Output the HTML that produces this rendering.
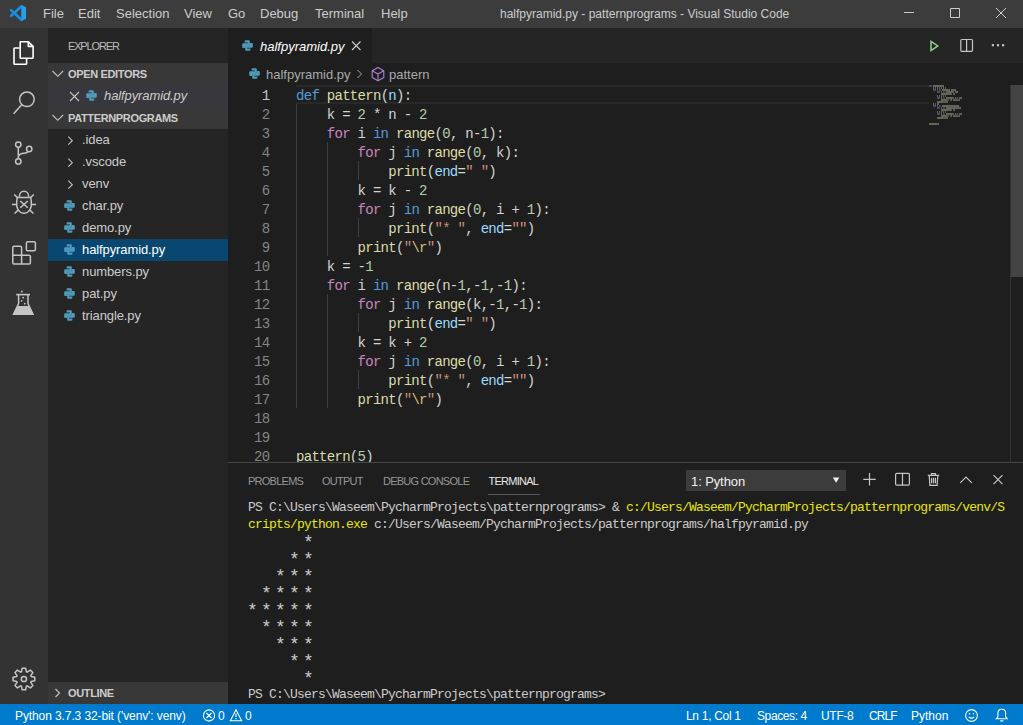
<!DOCTYPE html>
<html><head><meta charset="utf-8">
<style>
*{margin:0;padding:0;box-sizing:border-box}
html,body{width:1023px;height:725px;overflow:hidden;background:#1e1e1e;font-family:"Liberation Sans",sans-serif;position:relative}
.a{position:absolute;white-space:pre}
.r{position:absolute}
#title{left:0;top:0;width:1023px;height:28px;background:#3c3c3c}
.menu{font-size:13px;color:#cccccc;top:0;line-height:28px}
#act{left:0;top:28px;width:48px;height:676px;background:#333333}
#side{left:48px;top:28px;width:180px;height:676px;background:#252526}
#status{left:0;top:704px;width:1023px;height:21px;background:#007acc}
.st{font-size:12px;color:#ffffff;top:705px;line-height:22px}
.sec{position:absolute;left:48px;width:180px;height:22px;background:#383838}
.sh{font-size:11px;font-weight:bold;color:#cccccc;line-height:22px;letter-spacing:-0.35px}
.it{font-size:13px;color:#cccccc;line-height:22px;letter-spacing:-0.1px}
#tabs{left:228px;top:28px;width:795px;height:35px;background:#252526}
#tab{left:228px;top:28px;width:144px;height:35px;background:#1e1e1e}
.code{margin-top:2px;font-family:"Liberation Mono",monospace;font-size:14px;line-height:19px;color:#d4d4d4;letter-spacing:-0.71px}
.ln{font-family:"Liberation Mono",monospace;font-size:14px;line-height:19px;color:#858585;letter-spacing:-0.71px;text-align:right;width:60px;left:209.5px;margin-top:2px}
.kw{color:#569cd6}.ct{color:#c586c0}.fn{color:#dcdcaa}.pa{color:#9cdcfe}.nu{color:#b5cea8}.s{color:#ce9178}.es{color:#d7ba7d}
.guide{position:absolute;width:1px;background:#404040}
.term{margin-top:1px;font-family:"Liberation Mono",monospace;font-size:13px;line-height:17px;color:#cccccc;letter-spacing:-0.8px;left:248px}
.y{color:#e5e510}
.star{font-family:"Liberation Mono",monospace;font-size:18px;line-height:17px;color:#cccccc;width:7px;text-align:center;margin-top:3px}
.pt{font-size:11px;line-height:16px;color:#969696;top:473px;letter-spacing:-0.75px}
</style></head><body>
<svg width="0" height="0" style="position:absolute">
<defs>
<symbol id="py" viewBox="0 0 11 11">
<path fill="#519aba" d="M2.6,1.2Q2.6,0.3 3.5,0.3H7Q7.8,0.3 7.8,1.2V5.1Q7.8,5.8 7.1,5.8H3.9Q3.2,5.8 3.2,6.5V8H1.1Q0.2,8 0.2,7V4.3Q0.2,3.3 1.2,3.3H5.9V2.6H2.6Z"/>
<path fill="#519aba" transform="rotate(180 5.5 5.5)" d="M2.6,1.2Q2.6,0.3 3.5,0.3H7Q7.8,0.3 7.8,1.2V5.1Q7.8,5.8 7.1,5.8H3.9Q3.2,5.8 3.2,6.5V8H1.1Q0.2,8 0.2,7V4.3Q0.2,3.3 1.2,3.3H5.9V2.6H2.6Z"/>
</symbol>
</defs>
</svg>

<!-- TITLE BAR -->
<div class="r" id="title"></div>
<svg class="r" style="left:0;top:0" width="40" height="28" viewBox="0 0 40 28">
<g stroke="#1b8fdf" stroke-width="2.6" stroke-linecap="round" fill="none">
<path d="M21.5,6.3 L11.1,15.8"/>
<path d="M11.1,10.1 L21.5,19.7"/>
</g>
<path fill="#24a0f0" d="M21.3,5 L26,7.2 V18.8 L21.3,21 Z"/>
</svg>
<div class="a menu" style="left:43px">File</div>
<div class="a menu" style="left:78px">Edit</div>
<div class="a menu" style="left:116px">Selection</div>
<div class="a menu" style="left:184px">View</div>
<div class="a menu" style="left:228px">Go</div>
<div class="a menu" style="left:260px">Debug</div>
<div class="a menu" style="left:315px">Terminal</div>
<div class="a menu" style="left:381px">Help</div>
<div class="a" style="left:500px;top:0;line-height:28px;font-size:12px;color:#cccccc">halfpyramid.py - patternprograms - Visual Studio Code</div>
<svg class="r" style="left:880px;top:0" width="143" height="28" viewBox="880 0 143 28">
<path stroke="#cccccc" stroke-width="1" fill="none" d="M904,12.5H914 M950.5,8.5H959.5V17.5H950.5Z M996,8L1006,18 M1006,8L996,18"/>
</svg>

<!-- ACTIVITY BAR -->
<div class="r" id="act"></div>
<svg class="r" style="left:0;top:28px" width="48" height="676" viewBox="0 28 48 676">
<g fill="none" stroke="#ffffff" stroke-width="1.6" stroke-linejoin="round">
<path d="M19.5,48 H14.8 Q14,48 14,48.8 V63.4 Q14,64.2 14.8,64.2 H25.8 Q26.6,64.2 26.6,63.4 V58.2"/>
<path d="M20.2,41.8 H28.3 L33.1,46.4 V57.4 Q33.1,58.2 32.3,58.2 H21 Q20.2,58.2 20.2,57.4 V42.6 Q20.2,41.8 21,41.8Z"/>
<path d="M28.3,41.8 V46.4 H33.1"/>
</g>
<g fill="none" stroke="#c5c5c5" stroke-width="1.5">
<circle cx="26.9" cy="99.3" r="7.3"/>
<path d="M21.9,104.6 L13.6,113.8"/>
<circle cx="18.3" cy="144.6" r="2.7"/>
<circle cx="29.2" cy="149" r="2.7"/>
<circle cx="18.3" cy="161.4" r="2.7"/>
<path d="M18.3,147.3 V158.7 M18.3,156.5 Q19.5,153.5 24,153.2 Q27.5,153 28.1,151.3"/>
<!-- debug -->
<path d="M19.5,196.8 V195.8 A4.5,4.5 0 0 1 28.5,195.8 V196.8"/>
<path d="M17.2,197.6 H30.8 Q32,205 30.5,208.5 Q28.5,213.2 24,213.2 Q19.5,213.2 17.5,208.5 Q16,205 17.2,197.6Z"/>
<path d="M20.2,201 L27.8,207.8 M27.8,201 L20.2,207.8"/>
<path d="M14.2,194.6 L17.3,197.3 M33.8,194.6 L30.7,197.3 M12,204.5 H16.2 M36,204.5 H31.8 M14.6,213.6 L18.1,210 M33.4,213.6 L29.9,210"/>
<!-- extensions -->
<rect x="26.4" y="241.8" width="9" height="8.9" rx="1.3"/>
<path d="M12.8,255.2 V247.6 Q12.8,246.3 14.1,246.3 H20.3 Q21.6,246.3 21.6,247.6 V255.2 M12.8,255.2 H29.1 Q30.4,255.2 30.4,256.5 V262.8 Q30.4,264.1 29.1,264.1 H14.1 Q12.8,264.1 12.8,262.8 Z M21.6,255.2 V264.1"/>
<!-- flask -->
<path d="M16.2,294.6 H30" stroke-width="1.6"/>
<path d="M18.6,295 V303.5 L13.5,314.2 H33 L28,303.5 V295"/>
</g>
<g fill="#c5c5c5">
<path d="M17.9,306 H28.8 L33.8,315 H12.8 Z"/>
<circle cx="21.9" cy="291.5" r="0.9"/>
<circle cx="23.2" cy="297.7" r="0.9"/>
<circle cx="21.7" cy="300.8" r="0.9"/>
<circle cx="24.8" cy="303.7" r="0.9"/>
</g>
<g transform="translate(23.9,679)" fill="none" stroke="#c5c5c5" stroke-width="1.5" stroke-linejoin="round">
<path d="M-2.46,-7.19 L-1.75,-10.86 L1.75,-10.86 L2.46,-7.19 L3.34,-6.83 L6.44,-8.92 L8.92,-6.44 L6.83,-3.34 L7.19,-2.46 L10.86,-1.75 L10.86,1.75 L7.19,2.46 L6.83,3.34 L8.92,6.44 L6.44,8.92 L3.34,6.83 L2.46,7.19 L1.75,10.86 L-1.75,10.86 L-2.46,7.19 L-3.34,6.83 L-6.44,8.92 L-8.92,6.44 L-6.83,3.34 L-7.19,2.46 L-10.86,1.75 L-10.86,-1.75 L-7.19,-2.46 L-6.83,-3.34 L-8.92,-6.44 L-6.44,-8.92 L-3.34,-6.83Z"/>
<circle cx="0" cy="0" r="2.6"/>
</g>
</svg>

<!-- SIDEBAR -->
<div class="r" id="side"></div>
<div class="a" style="left:68px;top:29px;line-height:35px;font-size:11px;color:#bbbbbb;letter-spacing:-1.15px">EXPLORER</div>
<div class="sec" style="top:63px"></div>
<div class="r" style="left:48px;top:85px;width:180px;height:22px;background:#37373d"></div>
<div class="sec" style="top:107px"></div>
<svg class="r" style="left:48px;top:63px" width="180" height="66" viewBox="48 63 180 66">
<path fill="none" stroke="#c5c5c5" stroke-width="1.1" d="M52.5,71 L57.8,76.3 L63.1,71 M52.5,115 L57.8,120.3 L63.1,115 M70,92 L79,101 M79,92 L70,101"/>
</svg>
<div class="a sh" style="left:68px;top:63px">OPEN EDITORS</div>
<svg class="r" style="left:86px;top:90px" width="11" height="11"><use href="#py"/></svg>
<div class="a it" style="left:104px;top:85px;font-style:italic">halfpyramid.py</div>
<div class="a sh" style="left:68px;top:107px">PATTERNPROGRAMS</div>
<div class="r" style="left:48px;top:239px;width:180px;height:22px;background:#094771"></div>
<svg class="r" style="left:48px;top:129px" width="180" height="66" viewBox="48 129 180 66">
<path fill="none" stroke="#c5c5c5" stroke-width="1.1" d="M68.3,136.7 L72.3,140.7 L68.3,144.7 M68.3,158.7 L72.3,162.7 L68.3,166.7 M68.3,180.7 L72.3,184.7 L68.3,188.7"/>
</svg>
<div class="a it" style="left:82px;top:129px">.idea</div>
<div class="a it" style="left:82px;top:151px">.vscode</div>
<div class="a it" style="left:82px;top:173px">venv</div>
<svg class="r" style="left:64px;top:199.5px" width="11" height="11"><use href="#py"/></svg>
<div class="a it" style="left:82px;top:195px">char.py</div>
<svg class="r" style="left:64px;top:221.5px" width="11" height="11"><use href="#py"/></svg>
<div class="a it" style="left:82px;top:217px">demo.py</div>
<svg class="r" style="left:64px;top:243.5px" width="11" height="11"><use href="#py"/></svg>
<div class="a it" style="left:82px;top:239px;color:#ffffff">halfpyramid.py</div>
<svg class="r" style="left:64px;top:265.5px" width="11" height="11"><use href="#py"/></svg>
<div class="a it" style="left:82px;top:261px">numbers.py</div>
<svg class="r" style="left:64px;top:287.5px" width="11" height="11"><use href="#py"/></svg>
<div class="a it" style="left:82px;top:283px">pat.py</div>
<svg class="r" style="left:64px;top:309.5px" width="11" height="11"><use href="#py"/></svg>
<div class="a it" style="left:82px;top:305px">triangle.py</div>
<div class="sec" style="top:682px"></div>
<svg class="r" style="left:48px;top:682px" width="30" height="22" viewBox="48 682 30 22">
<path fill="none" stroke="#c5c5c5" stroke-width="1.1" d="M55.5,689 L59.5,693 L55.5,697"/>
</svg>
<div class="a sh" style="left:68px;top:682px">OUTLINE</div>


<!-- EDITOR -->
<div class="r" id="tabs"></div>
<div class="r" id="tab"></div>
<svg class="r" style="left:242px;top:40px" width="11" height="11"><use href="#py"/></svg>
<div class="a" style="left:260px;top:29px;line-height:35px;font-size:13px;font-style:italic;color:#ffffff;letter-spacing:0px">halfpyramid.py</div>
<svg class="r" style="left:340px;top:28px" width="32" height="35" viewBox="340 28 32 35">
<path fill="none" stroke="#cccccc" stroke-width="1.1" d="M352,41.5 L360.5,50 M360.5,41.5 L352,50"/>
</svg>
<svg class="r" style="left:920px;top:28px" width="103" height="35" viewBox="920 28 103 35">
<path fill="none" stroke="#89d185" stroke-width="1.5" stroke-linejoin="miter" d="M931,41.3 L937.8,45.9 L931,50.6 Z"/>
<rect x="960.8" y="39.5" width="11.7" height="11.8" rx="1" fill="none" stroke="#c5c5c5" stroke-width="1.2"/>
<path d="M966.6,39.5 V51.3" stroke="#c5c5c5" stroke-width="1.2"/>
<g fill="#c5c5c5"><rect x="991.8" y="44.1" width="2.2" height="2.2"/><rect x="996.9" y="44.1" width="2.2" height="2.2"/><rect x="1002" y="44.1" width="2.2" height="2.2"/></g>
</svg>
<svg class="r" style="left:248.5px;top:68px" width="11" height="11"><use href="#py"/></svg>
<div class="a" style="left:266px;top:64px;line-height:22px;font-size:13px;color:#a9a9a9;letter-spacing:0px">halfpyramid.py</div>
<svg class="r" style="left:350px;top:63px" width="50" height="22" viewBox="350 63 50 22">
<path fill="none" stroke="#a9a9a9" stroke-width="1" d="M357.5,70 L361.5,74 L357.5,78"/>
<g fill="none" stroke="#b180d7" stroke-width="1.1" stroke-linejoin="round">
<path d="M378,67.5 L383.8,70.8 V77.5 L378,80.7 L372.2,77.5 V70.8 Z"/>
<path d="M372.2,70.8 L378,74 L383.8,70.8 M378,74 V80.7"/>
</g>
</svg>
<div class="a" style="left:389px;top:64px;line-height:22px;font-size:13px;color:#a9a9a9;letter-spacing:0px">pattern</div>
<div class="r" style="left:1010px;top:85px;width:1px;height:377px;background:#333333"></div>
<div class="r" style="left:1011px;top:85px;width:12px;height:192px;background:#444444"></div>
<div class="r" style="left:296px;top:85px;width:633px;height:19px;border-top:2px solid #282828;border-bottom:2px solid #282828"></div>
<div class="guide" style="left:296.00px;top:104px;height:304px"></div>
<div class="guide" style="left:326.76px;top:142px;height:114px"></div>
<div class="guide" style="left:326.76px;top:294px;height:114px"></div>
<div class="guide" style="left:357.52px;top:161px;height:19px"></div>
<div class="guide" style="left:357.52px;top:218px;height:19px"></div>
<div class="guide" style="left:357.52px;top:313px;height:19px"></div>
<div class="guide" style="left:357.52px;top:370px;height:19px"></div>
<div class="a ln" style="top:85px;color:#c6c6c6">1</div>
<div class="a code" style="left:296px;top:85px"><span class="kw">def</span> <span class="fn">pattern</span>(<span class="pa">n</span>):</div>
<div class="a ln" style="top:104px;">2</div>
<div class="a code" style="left:296px;top:104px">    k = <span class="nu">2</span> * n - <span class="nu">2</span></div>
<div class="a ln" style="top:123px;">3</div>
<div class="a code" style="left:296px;top:123px">    <span class="ct">for</span> i <span class="kw">in</span> <span class="fn">range</span>(<span class="nu">0</span>, n-<span class="nu">1</span>):</div>
<div class="a ln" style="top:142px;">4</div>
<div class="a code" style="left:296px;top:142px">        <span class="ct">for</span> j <span class="kw">in</span> <span class="fn">range</span>(<span class="nu">0</span>, k):</div>
<div class="a ln" style="top:161px;">5</div>
<div class="a code" style="left:296px;top:161px">            <span class="fn">print</span>(<span class="pa">end</span>=<span class="s">&quot; &quot;</span>)</div>
<div class="a ln" style="top:180px;">6</div>
<div class="a code" style="left:296px;top:180px">        k = k - <span class="nu">2</span></div>
<div class="a ln" style="top:199px;">7</div>
<div class="a code" style="left:296px;top:199px">        <span class="ct">for</span> j <span class="kw">in</span> <span class="fn">range</span>(<span class="nu">0</span>, i + <span class="nu">1</span>):</div>
<div class="a ln" style="top:218px;">8</div>
<div class="a code" style="left:296px;top:218px">            <span class="fn">print</span>(<span class="s">&quot;* &quot;</span>, <span class="pa">end</span>=<span class="s">&quot;&quot;</span>)</div>
<div class="a ln" style="top:237px;">9</div>
<div class="a code" style="left:296px;top:237px">        <span class="fn">print</span>(<span class="s">&quot;</span><span class="es">\r</span><span class="s">&quot;</span>)</div>
<div class="a ln" style="top:256px;">10</div>
<div class="a code" style="left:296px;top:256px">    k = -<span class="nu">1</span></div>
<div class="a ln" style="top:275px;">11</div>
<div class="a code" style="left:296px;top:275px">    <span class="ct">for</span> i <span class="kw">in</span> <span class="fn">range</span>(n-<span class="nu">1</span>,-<span class="nu">1</span>,-<span class="nu">1</span>):</div>
<div class="a ln" style="top:294px;">12</div>
<div class="a code" style="left:296px;top:294px">        <span class="ct">for</span> j <span class="kw">in</span> <span class="fn">range</span>(k,-<span class="nu">1</span>,-<span class="nu">1</span>):</div>
<div class="a ln" style="top:313px;">13</div>
<div class="a code" style="left:296px;top:313px">            <span class="fn">print</span>(<span class="pa">end</span>=<span class="s">&quot; &quot;</span>)</div>
<div class="a ln" style="top:332px;">14</div>
<div class="a code" style="left:296px;top:332px">        k = k + <span class="nu">2</span></div>
<div class="a ln" style="top:351px;">15</div>
<div class="a code" style="left:296px;top:351px">        <span class="ct">for</span> j <span class="kw">in</span> <span class="fn">range</span>(<span class="nu">0</span>, i + <span class="nu">1</span>):</div>
<div class="a ln" style="top:370px;">16</div>
<div class="a code" style="left:296px;top:370px">            <span class="fn">print</span>(<span class="s">&quot;* &quot;</span>, <span class="pa">end</span>=<span class="s">&quot;&quot;</span>)</div>
<div class="a ln" style="top:389px;">17</div>
<div class="a code" style="left:296px;top:389px">        <span class="fn">print</span>(<span class="s">&quot;</span><span class="es">\r</span><span class="s">&quot;</span>)</div>
<div class="a ln" style="top:408px;">18</div>
<div class="a code" style="left:296px;top:408px"></div>
<div class="a ln" style="top:427px;">19</div>
<div class="a code" style="left:296px;top:427px"></div>
<div class="a ln" style="top:446px;">20</div>
<div class="a code" style="left:296px;top:446px"><span class="fn">pattern</span>(<span class="nu">5</span>)</div>
<svg class="r" style="left:929px;top:85px" width="60" height="42" viewBox="929 85 60 42" opacity="0.38"><rect x="929" y="85" width="1" height="2" fill="#569cd6"/><rect x="930" y="85" width="1" height="2" fill="#569cd6"/><rect x="931" y="85" width="1" height="2" fill="#569cd6"/><rect x="933" y="85" width="1" height="2" fill="#dcdcaa"/><rect x="934" y="85" width="1" height="2" fill="#dcdcaa"/><rect x="935" y="85" width="1" height="2" fill="#dcdcaa"/><rect x="936" y="85" width="1" height="2" fill="#dcdcaa"/><rect x="937" y="85" width="1" height="2" fill="#dcdcaa"/><rect x="938" y="85" width="1" height="2" fill="#dcdcaa"/><rect x="939" y="85" width="1" height="2" fill="#dcdcaa"/><rect x="940" y="85" width="1" height="2" fill="#d4d4d4"/><rect x="941" y="85" width="1" height="2" fill="#9cdcfe"/><rect x="942" y="85" width="1" height="2" fill="#d4d4d4"/><rect x="943" y="85" width="1" height="2" fill="#d4d4d4"/><rect x="933" y="87" width="1" height="2" fill="#d4d4d4"/><rect x="935" y="87" width="1" height="2" fill="#d4d4d4"/><rect x="937" y="87" width="1" height="2" fill="#b5cea8"/><rect x="939" y="87" width="1" height="2" fill="#d4d4d4"/><rect x="941" y="87" width="1" height="2" fill="#d4d4d4"/><rect x="943" y="87" width="1" height="2" fill="#d4d4d4"/><rect x="945" y="87" width="1" height="2" fill="#b5cea8"/><rect x="933" y="89" width="1" height="2" fill="#c586c0"/><rect x="934" y="89" width="1" height="2" fill="#c586c0"/><rect x="935" y="89" width="1" height="2" fill="#c586c0"/><rect x="937" y="89" width="1" height="2" fill="#d4d4d4"/><rect x="939" y="89" width="1" height="2" fill="#569cd6"/><rect x="940" y="89" width="1" height="2" fill="#569cd6"/><rect x="942" y="89" width="1" height="2" fill="#dcdcaa"/><rect x="943" y="89" width="1" height="2" fill="#dcdcaa"/><rect x="944" y="89" width="1" height="2" fill="#dcdcaa"/><rect x="945" y="89" width="1" height="2" fill="#dcdcaa"/><rect x="946" y="89" width="1" height="2" fill="#dcdcaa"/><rect x="947" y="89" width="1" height="2" fill="#d4d4d4"/><rect x="948" y="89" width="1" height="2" fill="#b5cea8"/><rect x="949" y="89" width="1" height="2" fill="#d4d4d4"/><rect x="951" y="89" width="1" height="2" fill="#d4d4d4"/><rect x="952" y="89" width="1" height="2" fill="#d4d4d4"/><rect x="953" y="89" width="1" height="2" fill="#b5cea8"/><rect x="954" y="89" width="1" height="2" fill="#d4d4d4"/><rect x="955" y="89" width="1" height="2" fill="#d4d4d4"/><rect x="937" y="91" width="1" height="2" fill="#c586c0"/><rect x="938" y="91" width="1" height="2" fill="#c586c0"/><rect x="939" y="91" width="1" height="2" fill="#c586c0"/><rect x="941" y="91" width="1" height="2" fill="#d4d4d4"/><rect x="943" y="91" width="1" height="2" fill="#569cd6"/><rect x="944" y="91" width="1" height="2" fill="#569cd6"/><rect x="946" y="91" width="1" height="2" fill="#dcdcaa"/><rect x="947" y="91" width="1" height="2" fill="#dcdcaa"/><rect x="948" y="91" width="1" height="2" fill="#dcdcaa"/><rect x="949" y="91" width="1" height="2" fill="#dcdcaa"/><rect x="950" y="91" width="1" height="2" fill="#dcdcaa"/><rect x="951" y="91" width="1" height="2" fill="#d4d4d4"/><rect x="952" y="91" width="1" height="2" fill="#b5cea8"/><rect x="953" y="91" width="1" height="2" fill="#d4d4d4"/><rect x="955" y="91" width="1" height="2" fill="#d4d4d4"/><rect x="956" y="91" width="1" height="2" fill="#d4d4d4"/><rect x="957" y="91" width="1" height="2" fill="#d4d4d4"/><rect x="941" y="93" width="1" height="2" fill="#dcdcaa"/><rect x="942" y="93" width="1" height="2" fill="#dcdcaa"/><rect x="943" y="93" width="1" height="2" fill="#dcdcaa"/><rect x="944" y="93" width="1" height="2" fill="#dcdcaa"/><rect x="945" y="93" width="1" height="2" fill="#dcdcaa"/><rect x="946" y="93" width="1" height="2" fill="#d4d4d4"/><rect x="947" y="93" width="1" height="2" fill="#9cdcfe"/><rect x="948" y="93" width="1" height="2" fill="#9cdcfe"/><rect x="949" y="93" width="1" height="2" fill="#9cdcfe"/><rect x="950" y="93" width="1" height="2" fill="#d4d4d4"/><rect x="951" y="93" width="1" height="2" fill="#ce9178"/><rect x="953" y="93" width="1" height="2" fill="#ce9178"/><rect x="954" y="93" width="1" height="2" fill="#d4d4d4"/><rect x="937" y="95" width="1" height="2" fill="#d4d4d4"/><rect x="939" y="95" width="1" height="2" fill="#d4d4d4"/><rect x="941" y="95" width="1" height="2" fill="#d4d4d4"/><rect x="943" y="95" width="1" height="2" fill="#d4d4d4"/><rect x="945" y="95" width="1" height="2" fill="#b5cea8"/><rect x="937" y="97" width="1" height="2" fill="#c586c0"/><rect x="938" y="97" width="1" height="2" fill="#c586c0"/><rect x="939" y="97" width="1" height="2" fill="#c586c0"/><rect x="941" y="97" width="1" height="2" fill="#d4d4d4"/><rect x="943" y="97" width="1" height="2" fill="#569cd6"/><rect x="944" y="97" width="1" height="2" fill="#569cd6"/><rect x="946" y="97" width="1" height="2" fill="#dcdcaa"/><rect x="947" y="97" width="1" height="2" fill="#dcdcaa"/><rect x="948" y="97" width="1" height="2" fill="#dcdcaa"/><rect x="949" y="97" width="1" height="2" fill="#dcdcaa"/><rect x="950" y="97" width="1" height="2" fill="#dcdcaa"/><rect x="951" y="97" width="1" height="2" fill="#d4d4d4"/><rect x="952" y="97" width="1" height="2" fill="#b5cea8"/><rect x="953" y="97" width="1" height="2" fill="#d4d4d4"/><rect x="955" y="97" width="1" height="2" fill="#d4d4d4"/><rect x="957" y="97" width="1" height="2" fill="#d4d4d4"/><rect x="959" y="97" width="1" height="2" fill="#b5cea8"/><rect x="960" y="97" width="1" height="2" fill="#d4d4d4"/><rect x="961" y="97" width="1" height="2" fill="#d4d4d4"/><rect x="941" y="99" width="1" height="2" fill="#dcdcaa"/><rect x="942" y="99" width="1" height="2" fill="#dcdcaa"/><rect x="943" y="99" width="1" height="2" fill="#dcdcaa"/><rect x="944" y="99" width="1" height="2" fill="#dcdcaa"/><rect x="945" y="99" width="1" height="2" fill="#dcdcaa"/><rect x="946" y="99" width="1" height="2" fill="#d4d4d4"/><rect x="947" y="99" width="1" height="2" fill="#ce9178"/><rect x="948" y="99" width="1" height="2" fill="#ce9178"/><rect x="950" y="99" width="1" height="2" fill="#ce9178"/><rect x="951" y="99" width="1" height="2" fill="#d4d4d4"/><rect x="953" y="99" width="1" height="2" fill="#9cdcfe"/><rect x="954" y="99" width="1" height="2" fill="#9cdcfe"/><rect x="955" y="99" width="1" height="2" fill="#9cdcfe"/><rect x="956" y="99" width="1" height="2" fill="#d4d4d4"/><rect x="957" y="99" width="1" height="2" fill="#ce9178"/><rect x="958" y="99" width="1" height="2" fill="#ce9178"/><rect x="959" y="99" width="1" height="2" fill="#d4d4d4"/><rect x="937" y="101" width="1" height="2" fill="#dcdcaa"/><rect x="938" y="101" width="1" height="2" fill="#dcdcaa"/><rect x="939" y="101" width="1" height="2" fill="#dcdcaa"/><rect x="940" y="101" width="1" height="2" fill="#dcdcaa"/><rect x="941" y="101" width="1" height="2" fill="#dcdcaa"/><rect x="942" y="101" width="1" height="2" fill="#d4d4d4"/><rect x="943" y="101" width="1" height="2" fill="#ce9178"/><rect x="944" y="101" width="1" height="2" fill="#d7ba7d"/><rect x="945" y="101" width="1" height="2" fill="#d7ba7d"/><rect x="946" y="101" width="1" height="2" fill="#ce9178"/><rect x="947" y="101" width="1" height="2" fill="#d4d4d4"/><rect x="933" y="103" width="1" height="2" fill="#d4d4d4"/><rect x="935" y="103" width="1" height="2" fill="#d4d4d4"/><rect x="937" y="103" width="1" height="2" fill="#d4d4d4"/><rect x="938" y="103" width="1" height="2" fill="#b5cea8"/><rect x="933" y="105" width="1" height="2" fill="#c586c0"/><rect x="934" y="105" width="1" height="2" fill="#c586c0"/><rect x="935" y="105" width="1" height="2" fill="#c586c0"/><rect x="937" y="105" width="1" height="2" fill="#d4d4d4"/><rect x="939" y="105" width="1" height="2" fill="#569cd6"/><rect x="940" y="105" width="1" height="2" fill="#569cd6"/><rect x="942" y="105" width="1" height="2" fill="#dcdcaa"/><rect x="943" y="105" width="1" height="2" fill="#dcdcaa"/><rect x="944" y="105" width="1" height="2" fill="#dcdcaa"/><rect x="945" y="105" width="1" height="2" fill="#dcdcaa"/><rect x="946" y="105" width="1" height="2" fill="#dcdcaa"/><rect x="947" y="105" width="1" height="2" fill="#d4d4d4"/><rect x="948" y="105" width="1" height="2" fill="#d4d4d4"/><rect x="949" y="105" width="1" height="2" fill="#d4d4d4"/><rect x="950" y="105" width="1" height="2" fill="#b5cea8"/><rect x="951" y="105" width="1" height="2" fill="#d4d4d4"/><rect x="952" y="105" width="1" height="2" fill="#d4d4d4"/><rect x="953" y="105" width="1" height="2" fill="#b5cea8"/><rect x="954" y="105" width="1" height="2" fill="#d4d4d4"/><rect x="955" y="105" width="1" height="2" fill="#d4d4d4"/><rect x="956" y="105" width="1" height="2" fill="#b5cea8"/><rect x="957" y="105" width="1" height="2" fill="#d4d4d4"/><rect x="958" y="105" width="1" height="2" fill="#d4d4d4"/><rect x="937" y="107" width="1" height="2" fill="#c586c0"/><rect x="938" y="107" width="1" height="2" fill="#c586c0"/><rect x="939" y="107" width="1" height="2" fill="#c586c0"/><rect x="941" y="107" width="1" height="2" fill="#d4d4d4"/><rect x="943" y="107" width="1" height="2" fill="#569cd6"/><rect x="944" y="107" width="1" height="2" fill="#569cd6"/><rect x="946" y="107" width="1" height="2" fill="#dcdcaa"/><rect x="947" y="107" width="1" height="2" fill="#dcdcaa"/><rect x="948" y="107" width="1" height="2" fill="#dcdcaa"/><rect x="949" y="107" width="1" height="2" fill="#dcdcaa"/><rect x="950" y="107" width="1" height="2" fill="#dcdcaa"/><rect x="951" y="107" width="1" height="2" fill="#d4d4d4"/><rect x="952" y="107" width="1" height="2" fill="#d4d4d4"/><rect x="953" y="107" width="1" height="2" fill="#d4d4d4"/><rect x="954" y="107" width="1" height="2" fill="#d4d4d4"/><rect x="955" y="107" width="1" height="2" fill="#b5cea8"/><rect x="956" y="107" width="1" height="2" fill="#d4d4d4"/><rect x="957" y="107" width="1" height="2" fill="#d4d4d4"/><rect x="958" y="107" width="1" height="2" fill="#b5cea8"/><rect x="959" y="107" width="1" height="2" fill="#d4d4d4"/><rect x="960" y="107" width="1" height="2" fill="#d4d4d4"/><rect x="941" y="109" width="1" height="2" fill="#dcdcaa"/><rect x="942" y="109" width="1" height="2" fill="#dcdcaa"/><rect x="943" y="109" width="1" height="2" fill="#dcdcaa"/><rect x="944" y="109" width="1" height="2" fill="#dcdcaa"/><rect x="945" y="109" width="1" height="2" fill="#dcdcaa"/><rect x="946" y="109" width="1" height="2" fill="#d4d4d4"/><rect x="947" y="109" width="1" height="2" fill="#9cdcfe"/><rect x="948" y="109" width="1" height="2" fill="#9cdcfe"/><rect x="949" y="109" width="1" height="2" fill="#9cdcfe"/><rect x="950" y="109" width="1" height="2" fill="#d4d4d4"/><rect x="951" y="109" width="1" height="2" fill="#ce9178"/><rect x="953" y="109" width="1" height="2" fill="#ce9178"/><rect x="954" y="109" width="1" height="2" fill="#d4d4d4"/><rect x="937" y="111" width="1" height="2" fill="#d4d4d4"/><rect x="939" y="111" width="1" height="2" fill="#d4d4d4"/><rect x="941" y="111" width="1" height="2" fill="#d4d4d4"/><rect x="943" y="111" width="1" height="2" fill="#d4d4d4"/><rect x="945" y="111" width="1" height="2" fill="#b5cea8"/><rect x="937" y="113" width="1" height="2" fill="#c586c0"/><rect x="938" y="113" width="1" height="2" fill="#c586c0"/><rect x="939" y="113" width="1" height="2" fill="#c586c0"/><rect x="941" y="113" width="1" height="2" fill="#d4d4d4"/><rect x="943" y="113" width="1" height="2" fill="#569cd6"/><rect x="944" y="113" width="1" height="2" fill="#569cd6"/><rect x="946" y="113" width="1" height="2" fill="#dcdcaa"/><rect x="947" y="113" width="1" height="2" fill="#dcdcaa"/><rect x="948" y="113" width="1" height="2" fill="#dcdcaa"/><rect x="949" y="113" width="1" height="2" fill="#dcdcaa"/><rect x="950" y="113" width="1" height="2" fill="#dcdcaa"/><rect x="951" y="113" width="1" height="2" fill="#d4d4d4"/><rect x="952" y="113" width="1" height="2" fill="#b5cea8"/><rect x="953" y="113" width="1" height="2" fill="#d4d4d4"/><rect x="955" y="113" width="1" height="2" fill="#d4d4d4"/><rect x="957" y="113" width="1" height="2" fill="#d4d4d4"/><rect x="959" y="113" width="1" height="2" fill="#b5cea8"/><rect x="960" y="113" width="1" height="2" fill="#d4d4d4"/><rect x="961" y="113" width="1" height="2" fill="#d4d4d4"/><rect x="941" y="115" width="1" height="2" fill="#dcdcaa"/><rect x="942" y="115" width="1" height="2" fill="#dcdcaa"/><rect x="943" y="115" width="1" height="2" fill="#dcdcaa"/><rect x="944" y="115" width="1" height="2" fill="#dcdcaa"/><rect x="945" y="115" width="1" height="2" fill="#dcdcaa"/><rect x="946" y="115" width="1" height="2" fill="#d4d4d4"/><rect x="947" y="115" width="1" height="2" fill="#ce9178"/><rect x="948" y="115" width="1" height="2" fill="#ce9178"/><rect x="950" y="115" width="1" height="2" fill="#ce9178"/><rect x="951" y="115" width="1" height="2" fill="#d4d4d4"/><rect x="953" y="115" width="1" height="2" fill="#9cdcfe"/><rect x="954" y="115" width="1" height="2" fill="#9cdcfe"/><rect x="955" y="115" width="1" height="2" fill="#9cdcfe"/><rect x="956" y="115" width="1" height="2" fill="#d4d4d4"/><rect x="957" y="115" width="1" height="2" fill="#ce9178"/><rect x="958" y="115" width="1" height="2" fill="#ce9178"/><rect x="959" y="115" width="1" height="2" fill="#d4d4d4"/><rect x="937" y="117" width="1" height="2" fill="#dcdcaa"/><rect x="938" y="117" width="1" height="2" fill="#dcdcaa"/><rect x="939" y="117" width="1" height="2" fill="#dcdcaa"/><rect x="940" y="117" width="1" height="2" fill="#dcdcaa"/><rect x="941" y="117" width="1" height="2" fill="#dcdcaa"/><rect x="942" y="117" width="1" height="2" fill="#d4d4d4"/><rect x="943" y="117" width="1" height="2" fill="#ce9178"/><rect x="944" y="117" width="1" height="2" fill="#d7ba7d"/><rect x="945" y="117" width="1" height="2" fill="#d7ba7d"/><rect x="946" y="117" width="1" height="2" fill="#ce9178"/><rect x="947" y="117" width="1" height="2" fill="#d4d4d4"/><rect x="929" y="123" width="1" height="2" fill="#dcdcaa"/><rect x="930" y="123" width="1" height="2" fill="#dcdcaa"/><rect x="931" y="123" width="1" height="2" fill="#dcdcaa"/><rect x="932" y="123" width="1" height="2" fill="#dcdcaa"/><rect x="933" y="123" width="1" height="2" fill="#dcdcaa"/><rect x="934" y="123" width="1" height="2" fill="#dcdcaa"/><rect x="935" y="123" width="1" height="2" fill="#dcdcaa"/><rect x="936" y="123" width="1" height="2" fill="#d4d4d4"/><rect x="937" y="123" width="1" height="2" fill="#b5cea8"/><rect x="938" y="123" width="1" height="2" fill="#d4d4d4"/></svg>

<!-- PANEL -->
<div class="r" style="left:228px;top:462px;width:795px;height:242px;background:#1e1e1e;border-top:1px solid #464646"></div>
<div class="a pt" style="left:248px">PROBLEMS</div>
<div class="a pt" style="left:322px">OUTPUT</div>
<div class="a pt" style="left:383px">DEBUG CONSOLE</div>
<div class="a pt" style="left:488.5px;color:#e7e7e7">TERMINAL</div>
<div class="r" style="left:488px;top:494px;width:52px;height:1px;background:#585858"></div>
<div class="r" style="left:686px;top:470px;width:160px;height:21px;background:#3c3c3c"></div>
<div class="a" style="left:691px;top:471px;line-height:21px;font-size:13px;color:#f0f0f0;letter-spacing:-0.1px">1: Python</div>
<svg class="r" style="left:820px;top:463px" width="203" height="35" viewBox="820 463 203 35">
<path fill="#f0f0f0" d="M832.8,477.6 H839.4 L836.1,482.8 Z"/>
<g fill="none" stroke="#c5c5c5" stroke-width="1.2" transform="translate(0,-0.7)">
<path d="M869.5,473.8 V486.2 M863.3,480 H875.7"/>
<rect x="895.6" y="474.1" width="13.8" height="11.8" rx="1.2"/>
<path d="M902.5,474.1 V485.9"/>
<path d="M927.8,476.1 H939.2 M931.5,476.1 V474.3 H935.5 V476.1 M929.2,476.1 L929.9,486.1 H937.1 L937.8,476.1 M931.6,478.5 V484 M933.5,478.5 V484 M935.4,478.5 V484"/>
<path d="M960.2,483.6 L966,477.8 L971.8,483.6"/>
<path d="M993.5,475.8 L1002.5,484.8 M1002.5,475.8 L993.5,484.8"/>
</g>
</svg>
<div class="a term" style="top:498px">PS C:\Users\Waseem\PycharmProjects\patternprograms&gt; &amp; <span class="y">c:/Users/Waseem/PycharmProjects/patternprograms/venv/S</span></div>
<div class="a term" style="top:515px"><span class="y">cripts/python.exe</span> c:/Users/Waseem/PycharmProjects/patternprograms/halfpyramid.py</div>
<div class="a star" style="left:303px;top:532px">*</div>
<div class="a star" style="left:289px;top:549px">*</div>
<div class="a star" style="left:303px;top:549px">*</div>
<div class="a star" style="left:275px;top:566px">*</div>
<div class="a star" style="left:289px;top:566px">*</div>
<div class="a star" style="left:303px;top:566px">*</div>
<div class="a star" style="left:261px;top:583px">*</div>
<div class="a star" style="left:275px;top:583px">*</div>
<div class="a star" style="left:289px;top:583px">*</div>
<div class="a star" style="left:303px;top:583px">*</div>
<div class="a star" style="left:247px;top:600px">*</div>
<div class="a star" style="left:261px;top:600px">*</div>
<div class="a star" style="left:275px;top:600px">*</div>
<div class="a star" style="left:289px;top:600px">*</div>
<div class="a star" style="left:303px;top:600px">*</div>
<div class="a star" style="left:261px;top:617px">*</div>
<div class="a star" style="left:275px;top:617px">*</div>
<div class="a star" style="left:289px;top:617px">*</div>
<div class="a star" style="left:303px;top:617px">*</div>
<div class="a star" style="left:275px;top:634px">*</div>
<div class="a star" style="left:289px;top:634px">*</div>
<div class="a star" style="left:303px;top:634px">*</div>
<div class="a star" style="left:289px;top:651px">*</div>
<div class="a star" style="left:303px;top:651px">*</div>
<div class="a star" style="left:303px;top:668px">*</div>
<div class="a term" style="top:685px">PS C:\Users\Waseem\PycharmProjects\patternprograms&gt;</div>

<!-- STATUS -->
<div class="r" id="status"></div>
<div class="a st" style="left:15px;letter-spacing:-0.1px">Python 3.7.3 32-bit ('venv': venv)</div>
<svg class="r" style="left:195px;top:704px" width="70" height="21" viewBox="195 704 70 21">
<g fill="none" stroke="#ffffff" stroke-width="1.1">
<circle cx="209" cy="715.5" r="5.6"/>
<path d="M206.5,713 L211.5,718 M211.5,713 L206.5,718"/>
<path d="M236,709.8 L241.6,720.8 H230.4 Z"/>
<path d="M236,713.5 V717"/>
</g>
<circle cx="236" cy="718.8" r="0.7" fill="#ffffff"/>
</svg>
<div class="a st" style="left:218px">0</div>
<div class="a st" style="left:245px">0</div>
<div class="a st" style="left:686px;letter-spacing:-0.3px">Ln 1, Col 1</div>
<div class="a st" style="left:757px;letter-spacing:-0.4px">Spaces: 4</div>
<div class="a st" style="left:821px;letter-spacing:-0.3px">UTF-8</div>
<div class="a st" style="left:869px;letter-spacing:-0.9px">CRLF</div>
<div class="a st" style="left:911px">Python</div>
<svg class="r" style="left:960px;top:704px" width="63" height="21" viewBox="960 704 63 21">
<g fill="none" stroke="#ffffff" stroke-width="1.1">
<circle cx="971.5" cy="715.5" r="5.9"/>
<path d="M968.8,716.8 Q971.5,719.5 974.2,716.8"/>
<path d="M996.3,718.8 H1007.2 L1005.6,716.8 V713.2 Q1005.6,709.3 1001.75,709.3 Q997.9,709.3 997.9,713.2 V716.8 Z M1000.3,720.3 Q1001.75,722 1003.2,720.3"/>
</g>
<g fill="#ffffff"><circle cx="969.5" cy="713.8" r="0.8"/><circle cx="973.5" cy="713.8" r="0.8"/></g>
</svg>
</body></html>
